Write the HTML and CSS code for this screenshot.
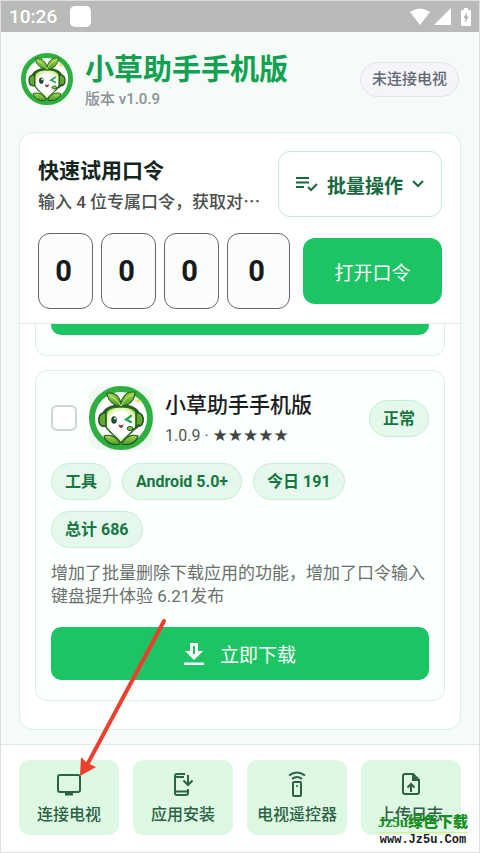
FILE: index.html
```html
<!DOCTYPE html>
<html lang="zh-CN">
<head>
<meta charset="utf-8">
<meta name="viewport" content="width=device-width, initial-scale=1">
<title>小草助手手机版</title>
<link rel="stylesheet" href="styles.css">
</head>
<body>
<svg class="defs" aria-hidden="true">
  <defs>
    <radialGradient id="faceFill" cx="50%" cy="48%" r="55%">
      <stop offset="0.6" stop-color="#ffffff"/>
      <stop offset="0.85" stop-color="#d8f29a"/>
      <stop offset="1" stop-color="#7cc043"/>
    </radialGradient>
    <linearGradient id="leafFill" x1="0" y1="0" x2="0" y2="1">
      <stop offset="0" stop-color="#a8dc4e"/>
      <stop offset="1" stop-color="#4a9a2a"/>
    </linearGradient>
  </defs>
  <symbol id="mascot" viewBox="0 0 64 64">
    <circle cx="32" cy="32" r="29" fill="#fff" stroke="#2fae42" stroke-width="6"/>
    <path d="M31 57C27 50 20 48 15 50C17 57 24 60 31 58ZM33 57C37 50 44 48 49 50C47 57 40 60 33 58Z" fill="url(#leafFill)" stroke="#1f5a22" stroke-width="1.2"/>
    <path d="M15 30C14 17 50 17 49 30" fill="none" stroke="#245a25" stroke-width="4"/>
    <path d="M32 21C44 20 50 26 49 35C48 45 38 48 32 57C26 48 16 45 15 35C14 26 20 20 32 21Z" fill="url(#faceFill)" stroke="#2d6b25" stroke-width="1.5"/>
    <path d="M17 27C11 26 9 31 10 36C11 40 14 41 17 40Z" fill="#5fa832" stroke="#1f4d20" stroke-width="1.5"/>
    <path d="M47 27C53 26 55 31 54 36C53 40 50 41 47 40Z" fill="#5fa832" stroke="#1f4d20" stroke-width="1.5"/>
    <path d="M32 20C26 20 19 16 18 7C26 6 32 11 32 20Z" fill="url(#leafFill)" stroke="#2c6824" stroke-width="1.2"/>
    <path d="M32 20C32 11 38 5 46 6C46 14 40 20 32 20Z" fill="url(#leafFill)" stroke="#2c6824" stroke-width="1.2"/>
    <path d="M21 10C25 12 29 15 32 20C34 15 38 11 43 9" fill="none" stroke="#d4ef83" stroke-width="1"/>
    <ellipse cx="25" cy="34" rx="2.8" ry="3.8" fill="#204a31"/>
    <circle cx="26" cy="32.5" r="1" fill="#fff"/>
    <path d="M42 30L37 33.5L42 36" fill="none" stroke="#23a84a" stroke-width="2.2" stroke-linecap="round"/>
    <path d="M29.500 38Q32 40.500 34.500 38Q34 42 32 42Q30 42 29.500 38Z" fill="#8e3a2c"/>
    <path d="M50 38Q48 44 42 43" fill="none" stroke="#28552a" stroke-width="1.500"/>
    <ellipse cx="41" cy="42.500" rx="3" ry="2" fill="#86bd45" stroke="#28552a"/>
    <path d="M49 11L50 14L53 15L50 16L49 18L48 16L46 15L48 14Z" fill="#f3dc58"/>
  </symbol>
</svg>

<div class="status-bar">
  <div class="status-left"><time>10:26</time><span class="notice"></span></div>
  <div class="status-right">
    <svg class="wifi" viewBox="0 0 20 17"><path d="M0 4Q10-3 20 4L10 17Z" fill="#fff"/></svg>
    <svg class="signal" viewBox="0 0 17 17"><path d="M17 0V17H0Z" fill="#fff"/></svg>
    <svg class="battery" viewBox="0 0 10 18"><path d="M3 0H7V2H9Q10 2 10 3V17Q10 18 9 18H1Q0 18 0 17V3Q0 2 1 2H3Z" fill="#fff"/><path d="M6 4L2.500 10H4.700L4 15L7.500 8.500H5.300Z" fill="#a9aba9"/></svg>
  </div>
</div>

<header class="app-header">
  <svg class="brand-logo" role="img" aria-label="小草助手"><use href="#mascot"/></svg>
  <div class="brand-text">
    <h1>小草助手手机版</h1>
    <p>版本 v1.0.9</p>
  </div>
  <span class="connection">未连接电视</span>
</header>

<main class="panel">
  <section class="quick">
    <div class="quick-row">
      <div class="quick-text">
        <h2>快速试用口令</h2>
        <p>输入 4 位专属口令，获取对<span class="dots">…</span></p>
      </div>
      <button class="batch" type="button">
        <svg class="icon-list" viewBox="0 0 22 16" fill="none" stroke="currentColor" stroke-width="2"><path d="M0 2H13M0 6.500H13M0 11H8M12 11L15 14L21 8"/></svg>
        批量操作
        <svg class="icon-chevron" viewBox="0 0 12 8" fill="none" stroke="currentColor" stroke-width="2"><path d="M1 1L6 6L11 1"/></svg>
      </button>
    </div>
    <form class="quick-row">
      <div class="code">
        <input type="text" inputmode="numeric" maxlength="1" value="0" aria-label="口令第 1 位">
        <input type="text" inputmode="numeric" maxlength="1" value="0" aria-label="口令第 2 位">
        <input type="text" inputmode="numeric" maxlength="1" value="0" aria-label="口令第 3 位">
        <input type="text" inputmode="numeric" maxlength="1" value="0" aria-label="口令第 4 位">
      </div>
      <button class="open" type="button">打开口令</button>
    </form>
  </section>

  <section class="app-list">
    <article class="app-card">
      <button class="download" type="button" aria-label="立即下载"></button>
    </article>
    <article class="app-card">
      <div class="app-head">
        <input class="pick" type="checkbox" aria-label="选择小草助手手机版">
        <svg class="app-icon" aria-hidden="true"><use href="#mascot"/></svg>
        <div class="app-title">
          <h3>小草助手手机版</h3>
          <p>1.0.9 · <span class="stars">★★★★★</span></p>
        </div>
        <span class="tag">正常</span>
      </div>
      <div class="tags">
        <span class="tag">工具</span>
        <span class="tag">Android 5.0+</span>
        <span class="tag">今日 191</span>
        <span class="tag">总计 686</span>
      </div>
      <p class="description">增加了批量删除下载应用的功能，增加了口令输入键盘提升体验 6.21发布</p>
      <button class="download" type="button">
        <svg class="icon-download" viewBox="0 0 20 24"><path d="M6 1H14V9H19L10 18L1 9H6Z" fill="#fff"/><path d="M9 4H11V12H9Z" fill="#1cc464"/><path d="M0 20.500H20V23H0Z" fill="#fff"/></svg>
        立即下载
      </button>
    </article>
  </section>
</main>

<nav class="bottom-nav">
  <button type="button">
    <svg viewBox="0 0 26 26" fill="none" stroke="currentColor" stroke-width="2"><rect x="2" y="4" width="22" height="17" rx="2"/><path d="M9 23H17" stroke-width="3"/></svg>
    连接电视
  </button>
  <button type="button">
    <svg viewBox="0 0 26 26" fill="none" stroke="currentColor" stroke-width="2"><path d="M15 3H7Q5 3 5 5V22Q5 24 7 24H16Q18 24 18 22V18M5 6H14M5 20.500H18M18 4V14M13.500 9.500L18 14L22.500 9.500"/></svg>
    应用安装
  </button>
  <button type="button">
    <svg viewBox="0 0 26 26" fill="none" stroke="currentColor" stroke-width="2"><rect x="9" y="11" width="8" height="14" rx="1"/><path d="M5 4.500Q13-1.500 21 4.500M8 8Q13 4 18 8"/><circle cx="13" cy="15" r="1" fill="currentColor" stroke="none"/></svg>
    电视遥控器
  </button>
  <button type="button">
    <svg viewBox="0 0 26 26" fill="none" stroke="currentColor" stroke-width="2"><path d="M7 3H15L21 9V21Q21 23 19 23H7Q5 23 5 21V5Q5 3 7 3ZM13 21V13M9.500 16.500L13 13L16.500 16.500"/><path d="M14 3V10H21Z" fill="currentColor" stroke="none"/></svg>
    上传日志
  </button>
</nav>

<svg class="pointer" viewBox="0 0 90 162" aria-hidden="true"><path d="M87 3L10 147" stroke="#ee3f2c" stroke-width="4" stroke-linecap="round"/><path d="M3 158L4 139L10 145L19 149Z" fill="#ee3f2c"/></svg>
<div class="watermark"><strong>Jz5u绿色下载</strong><span>www.Jz5u.Com</span></div>
</body>
</html>
```

FILE: styles.css
```css
* { box-sizing: border-box; }
h1, h2, h3, p { margin: 0; }
button, input { font: inherit; margin: 0; }
button { display: flex; align-items: center; justify-content: center; padding: 0; border: 0; cursor: pointer; }
svg { display: block; flex: none; }

body {
  position: relative;
  display: flex;
  flex-direction: column;
  height: 100vh;
  margin: 0;
  border: 1px solid #dcdfdd;
  overflow: hidden;
  background: #f4fbf8;
  color: #1b1d1c;
  font-family: Roboto, "Noto Sans CJK SC", sans-serif;
  font-size: 16px;
}
.defs { position: absolute; width: 0; height: 0; }

.status-bar {
  display: flex;
  align-items: center;
  justify-content: space-between;
  flex: none;
  height: 31px;
  padding: 0 8px;
  background: #b8bbb8;
  color: #fff;
  font-size: 19px;
  font-weight: 500;
}
.status-left { display: flex; align-items: center; gap: 13px; }
.status-right { display: flex; align-items: center; gap: 4px; }
.notice { width: 21px; height: 21px; border-radius: 5px; background: #fff; }
.wifi { width: 20px; height: 17px; }
.signal { width: 17px; height: 17px; margin-right: 6px; }
.battery { width: 10px; height: 18px; }

.app-header { display: flex; align-items: center; flex: none; gap: 12px; padding: 15px 20px 21px; }
.brand-logo { width: 52px; height: 52px; }
.brand-text { flex: 1; padding-top: 5px; }
.brand-text h1 { color: #12a150; font-size: 29px; font-weight: 700; line-height: 36px; }
.brand-text p { color: #8c9195; font-size: 15px; font-weight: 500; line-height: 23px; }
.connection {
  padding: 0 11px;
  border: 1px solid #e4e5ea;
  border-radius: 18px;
  background: #f4f4f9;
  color: #636873;
  font-size: 15px;
  font-weight: 500;
  line-height: 33px;
}

.panel {
  display: flex;
  flex: 1;
  flex-direction: column;
  min-height: 0;
  margin: 0 18px 14px;
  border: 1px solid #d9eee5;
  border-radius: 14px;
  overflow: hidden;
  background: #fff;
}
.quick { display: grid; flex: none; gap: 16px; padding: 18px 18px 14px; border-bottom: 1px solid #deeee7; }
.quick-row { display: flex; align-items: center; gap: 13px; }
.quick-text { flex: 1; min-width: 0; padding-top: 4px; white-space: nowrap; }
.quick-text h2 { color: #14251d; font-size: 21px; font-weight: 700; line-height: 30px; }
.quick-text p { color: #4b4f4d; font-size: 17px; font-weight: 500; line-height: 30px; }
.dots { font-family: "Noto Sans CJK SC", sans-serif; }
.batch {
  gap: 9px;
  width: 164px;
  height: 66px;
  border: 1px solid #c5e9d8;
  border-radius: 12px;
  background: #fff;
  color: #17693d;
  font-size: 19px;
  font-weight: 700;
}
.icon-list { width: 22px; height: 16px; }
.icon-chevron { width: 12px; height: 8px; }
.code { display: grid; flex: 1; grid-template-columns: repeat(3, 55px) 1fr; gap: 8px; }
.code input {
  width: 100%;
  height: 76px;
  padding: 0 4px 0 0;
  border: 1px solid #656766;
  border-radius: 12px;
  background: #fbfdfc;
  color: #191b1a;
  font-size: 29px;
  font-weight: 700;
  text-align: center;
}
.open { width: 139px; height: 66px; border-radius: 12px; background: #1cc464; color: #fff; font-size: 19px; }

.app-list {
  display: flex;
  flex: 1;
  flex-direction: column;
  justify-content: flex-end;
  gap: 14px;
  min-height: 0;
  padding: 0 15px 28px;
  overflow: hidden;
}
.app-card { flex: none; padding: 15px 15px 20px; border: 1px solid #dbefe6; border-radius: 12px; background: #fbfffd; }
.app-head { display: flex; align-items: center; gap: 12px; }
.pick { appearance: none; width: 26px; height: 26px; border: 2px solid #c9d8d1; border-radius: 6px; background: #fff; }
.app-icon { width: 64px; height: 64px; border-radius: 12px; background: #eefaf2; }
.app-title { flex: 1; padding-top: 3px; }
.app-title h3 { font-size: 21px; font-weight: 500; line-height: 32px; }
.app-title p { color: #555957; line-height: 28px; }
.stars { color: #424543; font-family: "DejaVu Sans", sans-serif; font-size: 17px; }
.tags { display: flex; flex-wrap: wrap; gap: 11px; padding: 13px 0 14px; }
.tag {
  padding: 0 13px;
  border: 1px solid #c6eed6;
  border-radius: 19px;
  background: #e4f9ec;
  color: #197643;
  font-weight: 700;
  line-height: 35px;
}
.description { color: #6a706d; font-size: 17px; line-height: 23px; }
.download {
  gap: 16px;
  width: 100%;
  height: 53px;
  margin-top: 19px;
  border-radius: 10px;
  background: #1cc464;
  color: #fff;
  font-size: 19px;
}
.icon-download { width: 20px; height: 24px; }

.bottom-nav {
  display: grid;
  flex: none;
  grid-template-columns: repeat(4, 1fr);
  gap: 14px;
  padding: 15px 18px 17px;
  border-top: 1px solid #dcece5;
  background: #fff;
}
.bottom-nav button {
  flex-direction: column;
  gap: 6px;
  height: 75px;
  padding-top: 2px;
  border-radius: 10px;
  background: #def8e3;
  color: #2b6343;
  font-weight: 500;
  line-height: 24px;
}
.bottom-nav svg { width: 26px; height: 26px; }

.pointer { position: absolute; bottom: 72px; left: 76px; width: 90px; height: 162px; pointer-events: none; }
.watermark {
  position: absolute;
  right: 11px;
  bottom: 5px;
  display: grid;
  justify-items: center;
  color: #16191d;
  font-family: "Liberation Mono", monospace;
  font-size: 12px;
  font-weight: 700;
  line-height: 14px;
  pointer-events: none;
}
.watermark strong {
  border-bottom: 1px solid #d9f08a;
  color: #168f20;
  font-family: "Liberation Serif", "Noto Sans CJK SC", serif;
  font-size: 15px;
  line-height: 20px;
}
```
